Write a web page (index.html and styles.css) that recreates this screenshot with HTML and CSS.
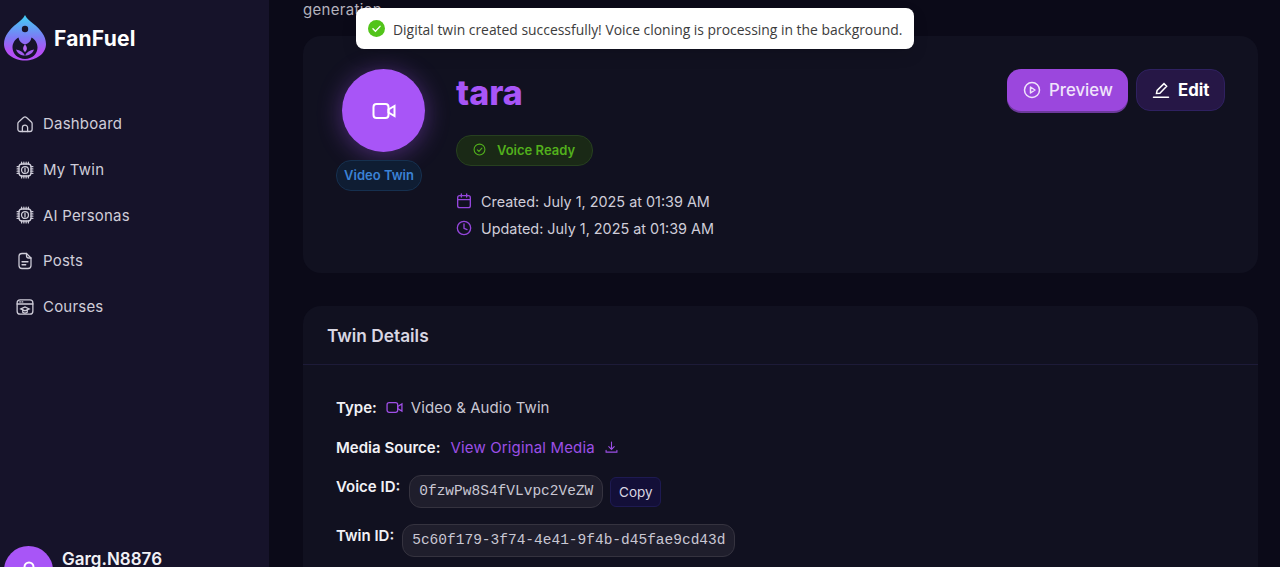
FILE: index.html
```html
<!DOCTYPE html>
<html lang="en">
<head>
  <meta charset="UTF-8">
  <meta name="viewport" content="width=device-width, initial-scale=1.0">
  <title>FanFuel - tara</title>
  <link rel="stylesheet" href="styles.css">
</head>
<body>
  <svg class="sprites" width="0" height="0">
    <defs>
      <linearGradient id="dropFill" x1="0" y1="0" x2="0" y2="1">
        <stop offset="0.05" stop-color="#45c8f4"/>
        <stop offset="0.5" stop-color="#7d7af5"/>
        <stop offset="0.8" stop-color="#b44ff6"/>
      </linearGradient>
      <symbol id="i-chip" viewBox="0 0 24 24">
        <rect x="4" y="4" width="16" height="16" rx="4"/>
        <circle cx="12" cy="12" r="4.6"/>
        <path d="M12 9.500v5M7.500 1.500v2.500M10.500 1.500v2.500M13.500 1.500v2.500M16.500 1.500v2.500M7.500 20v2.500M10.500 20v2.500M13.500 20v2.500M16.500 20v2.500M1.500 7.500H4M1.500 10.500H4M1.500 13.500H4M1.500 16.500H4M20 7.500h2.500M20 10.500h2.500M20 13.500h2.500M20 16.500h2.500"/>
      </symbol>
      <symbol id="i-video" viewBox="0 0 24 24">
        <rect x="1.500" y="5" width="15" height="14" rx="3"/>
        <path d="M16.500 10.500l6-3.500v10l-6-3.500z"/>
      </symbol>
    </defs>
  </svg>

  <div class="shell">
    <aside class="sidebar">
      <div class="brand">
        <svg class="logo" viewBox="0 0 42 46">
          <path fill="url(#dropFill)" d="M21 0c1.500 3 4 5.500 8 8.500 7 5.500 13 12 13 20.500C42 38.500 32.500 45.500 21 45.500S0 38.500 0 29C0 20.500 6 14 13 8.500 17 5.500 19.500 3 21 0z"/>
          <circle cx="21" cy="14" r="3.200" fill="#17142b"/>
          <path fill="#17142b" d="M21 44c-7 0-12.500-5-12.500-11.500 0-4.500 2.500-8 6-10 .5 3.500 3 6 6.500 7 3.500-1 6-3.500 6.500-7 3.500 2 6 5.500 6 10C33.500 39 28 44 21 44z"/>
          <path fill="#a45cf0" d="M21 40.500c-1.500-3.500-5-5.500-9-6 1.500 4 5 6 9 6zM21 40.500c1.500-3.500 5-5.500 9-6-1.500 4-5 6-9 6z"/>
          <path fill="#b565f5" d="M21 37c-2.500-2-2.500-5 0-7.500 2.500 2.500 2.500 5.500 0 7.500z"/>
        </svg>
        <span class="brand-name">FanFuel</span>
      </div>
      <nav class="nav">
        <a class="nav-item" href="#">
          <svg class="nav-icon" viewBox="0 0 24 24"><path d="M2.500 11.500a3 3 0 0 1 1-2.200L10 3.300a3 3 0 0 1 4 0l6.500 6a3 3 0 0 1 1 2.200V19a3 3 0 0 1-3 3h-13a3 3 0 0 1-3-3z"/><path d="M8.500 22v-5a3.500 3.500 0 0 1 7 0v5"/></svg>
          Dashboard
        </a>
        <a class="nav-item" href="#">
          <svg class="nav-icon"><use href="#i-chip"/></svg>
          My Twin
        </a>
        <a class="nav-item" href="#">
          <svg class="nav-icon"><use href="#i-chip"/></svg>
          AI Personas
        </a>
        <a class="nav-item" href="#">
          <svg class="nav-icon" viewBox="0 0 24 24"><path d="M14 2H8a4 4 0 0 0-4 4v12a4 4 0 0 0 4 4h8a4 4 0 0 0 4-4V8z" stroke-linejoin="round"/><path d="M14 2v3a3 3 0 0 0 3 3h3M8 13h8M8 17h5"/></svg>
          Posts
        </a>
        <a class="nav-item" href="#">
          <svg class="nav-icon" viewBox="0 0 24 24"><rect x="1.500" y="2.500" width="21" height="19" rx="4"/><path d="M1.500 8h21M5 5.300h1M8 5.300h1M6.500 14.500L12 12l5.500 2.500L12 17zM9 16v3a5 5 0 0 0 6 0v-3"/></svg>
          Courses
        </a>
      </nav>
      <div class="user">
        <div class="user-avatar">
          <svg viewBox="0 0 24 24"><circle cx="12" cy="8" r="4.500"/><path d="M3.500 22a8.500 8.500 0 0 1 17 0"/></svg>
        </div>
        <span class="user-name">Garg.N8876</span>
      </div>
    </aside>

    <main class="main">
      <p class="intro">generation</p>

      <section class="card hero">
        <div class="hero-left">
          <div class="hero-avatar"><svg class="hero-avatar-icon"><use href="#i-video"/></svg></div>
          <span class="type-badge">Video Twin</span>
        </div>
        <div class="hero-info">
          <h1 class="hero-title">tara</h1>
          <span class="voice-badge">
            <svg viewBox="0 0 24 24"><circle cx="12" cy="12" r="10"/><path d="M8 12.500l3 3 5.500-6"/></svg>
            Voice Ready
          </span>
          <div class="dates">
            <div class="date-row">
              <svg viewBox="0 0 24 24"><rect x="2.500" y="4" width="19" height="18" rx="3"/><path d="M2.500 10h19M8 1.500V6M16 1.500V6"/></svg>
              Created: July 1, 2025 at 01:39 AM
            </div>
            <div class="date-row">
              <svg viewBox="0 0 24 24"><circle cx="12" cy="12" r="10"/><path d="M12 6v6.500l4.500 2"/></svg>
              Updated: July 1, 2025 at 01:39 AM
            </div>
          </div>
        </div>
        <div class="hero-actions">
          <button class="btn btn-preview">
            <svg viewBox="0 0 24 24"><circle cx="12" cy="12" r="10"/><path d="M10 8l6 4-6 4z" stroke-linejoin="round"/></svg>
            Preview
          </button>
          <button class="btn btn-edit">
            <svg viewBox="0 0 24 24"><path d="M6 16.500l.8-4L16 3.500l3.500 3.500-9 9.300zM2 21.500h20"/></svg>
            Edit
          </button>
        </div>
      </section>

      <section class="card details">
        <h2 class="details-title">Twin Details</h2>
        <div class="details-body">
          <div class="detail-row">
            <span class="detail-label">Type:</span>
            <svg class="detail-icon"><use href="#i-video"/></svg>
            <span class="detail-value">Video &amp; Audio Twin</span>
          </div>
          <div class="detail-row row-media">
            <span class="detail-label">Media Source:</span>
            <a class="detail-link" href="#">View Original Media</a>
            <svg class="link-icon" viewBox="0 0 24 24"><path d="M12 2v13M7 10.500l5 5 5-5M2 17v3.500h20V17"/></svg>
          </div>
          <div class="detail-row row-id">
            <span class="detail-label">Voice ID:</span>
            <code class="id-chip">0fzwPw8S4fVLvpc2VeZW</code>
            <button class="copy-btn">Copy</button>
          </div>
          <div class="detail-row row-id">
            <span class="detail-label label-twin">Twin ID:</span>
            <code class="id-chip">5c60f179-3f74-4e41-9f4b-d45fae9cd43d</code>
          </div>
        </div>
      </section>
    </main>
  </div>

  <div class="toast">
    <svg viewBox="0 0 24 24"><circle cx="12" cy="12" r="12" fill="#52c41a"/><path d="M7 12.500l3.500 3.500 6.500-7" fill="none" stroke="#fff" stroke-width="2"/></svg>
    <span class="toast-text">Digital twin created successfully! Voice cloning is processing in the background.</span>
  </div>
</body>
</html>
```

FILE: styles.css
```css
html, body {
  margin: 0;
  height: 100%;
  overflow: hidden;
}
body {
  font-family: Inter, 'Open Sans', sans-serif;
  background: #0b0a18;
  color: #d8d6e2;
}
svg {
  fill: none;
  stroke: currentColor;
  stroke-width: 2;
  stroke-linecap: round;
  flex-shrink: 0;
}
.sprites {
  position: absolute;
}
.shell {
  display: flex;
  height: 567px;
  overflow: hidden;
}

/* sidebar */
.sidebar {
  width: 269px;
  height: 567px;
  flex-shrink: 0;
  background: #16132a;
  display: flex;
  flex-direction: column;
  overflow: hidden;
}
.brand {
  display: flex;
  align-items: center;
  gap: 8px;
  padding: 15px 0 0 4px;
  height: 46px;
}
.logo {
  width: 42px;
  height: 46px;
  stroke: none;
}
.logo * {
  stroke: none;
}
.brand-name {
  font-size: 21px;
  font-weight: 700;
  color: #fff;
  letter-spacing: 0.2px;
}
.nav {
  display: flex;
  flex-direction: column;
  margin-top: 40px;
}
.nav-item {
  display: flex;
  align-items: center;
  gap: 9px;
  height: 45.7px;
  padding-left: 16px;
  font-size: 15px;
  letter-spacing: 0.2px;
  color: #cfcdd9;
  text-decoration: none;
}
.nav-icon {
  width: 18px;
  height: 18px;
  stroke-width: 1.700;
}
.user {
  display: flex;
  gap: 9px;
  margin-top: 217px;
  padding-left: 4px;
}
.user-avatar {
  width: 49px;
  height: 49px;
  border-radius: 50%;
  background: #a855f7;
  color: #fff;
  display: flex;
  justify-content: center;
  align-items: center;
  flex-shrink: 0;
}
.user-avatar svg {
  width: 24px;
  height: 24px;
}
.user-name {
  font-size: 17px;
  font-weight: 600;
  color: #f2f1f6;
  line-height: 26px;
}

/* main column */
.main {
  flex: 1;
  min-width: 0;
  padding: 0 22px 0 34px;
}
.intro {
  margin: 0;
  font-size: 15px;
  line-height: 20px;
  letter-spacing: 0.3px;
  color: #b4b2bd;
  height: 36px;
}
.card {
  background: #111120;
  border-radius: 18px;
}

/* hero card */
.hero {
  display: flex;
  height: 237px;
  box-sizing: border-box;
  padding: 33px 33px 0 33px;
}
.hero-left {
  width: 86px;
  display: flex;
  flex-direction: column;
  align-items: flex-start;
  gap: 8px;
}
.hero-avatar {
  width: 83px;
  height: 83px;
  margin-left: 6px;
  border-radius: 50%;
  background: #a855f7;
  color: #fff;
  box-shadow: 0 3px 24px rgba(168, 85, 247, 0.4);
  display: flex;
  justify-content: center;
  align-items: center;
}
.hero-avatar-icon {
  width: 24px;
  height: 24px;
}
.type-badge {
  width: 86px;
  height: 31px;
  box-sizing: border-box;
  border: 1px solid #16304f;
  background: #0f1d33;
  border-radius: 15px;
  font-size: 13px;
  font-weight: 600;
  line-height: 29px;
  text-align: center;
  color: #3b82d6;
}
.hero-info {
  margin-left: 34px;
  flex: 1;
  display: flex;
  flex-direction: column;
  align-items: flex-start;
}
.hero-title {
  margin: 0;
  font-size: 34px;
  font-weight: 800;
  line-height: 48px;
  color: #a855f7;
}
.voice-badge {
  display: flex;
  align-items: center;
  gap: 11px;
  margin-top: 18px;
  width: 137px;
  height: 31px;
  box-sizing: border-box;
  padding: 0 0 2px 16px;
  border: 1px solid #27401f;
  border-radius: 15px;
  background: #1a2916;
  color: #52b01c;
  font-size: 13px;
  font-weight: 600;
}
.voice-badge svg {
  width: 13px;
  height: 13px;
}
.dates {
  display: flex;
  flex-direction: column;
  gap: 7px;
  margin-top: 25px;
}
.date-row {
  display: flex;
  align-items: center;
  gap: 9px;
  height: 20px;
  font-size: 14.4px;
  color: #cfcdd9;
}
.date-row svg {
  width: 16px;
  height: 16px;
  color: #9546dc;
}
.hero-actions {
  display: flex;
  gap: 8px;
  align-items: flex-start;
}
.btn {
  display: flex;
  align-items: center;
  gap: 8px;
  height: 42px;
  box-sizing: border-box;
  border-radius: 14px;
  font-family: inherit;
  font-size: 16.8px;
  color: #fff;
}
.btn svg {
  width: 18px;
  height: 18px;
}
.btn-preview {
  width: 121px;
  padding: 0 0 0 16px;
  border: 0;
  background: #9b47dd;
  box-shadow: 0 2px 0 #6d3a9c;
  font-weight: 500;
  color: #f0e4fb;
}
.btn-edit {
  width: 89px;
  padding: 0 0 0 15px;
  border: 1px solid #2f2160;
  background: #261746;
  font-weight: 700;
}

/* details card */
.details {
  margin-top: 33px;
  height: 400px;
}
.details-title {
  margin: 0;
  height: 59px;
  box-sizing: border-box;
  padding-left: 24px;
  border-bottom: 1px solid #1d1b38;
  font-size: 17.300px;
  font-weight: 600;
  line-height: 59px;
  color: #d8d6e2;
}
.details-body {
  padding: 23px 0 0 33px;
}
.detail-row {
  display: flex;
  align-items: center;
  height: 39.500px;
  font-size: 15px;
}
.row-media {
  margin-bottom: 8px;
}
.detail-label {
  font-weight: 600;
  color: #f2f1f6;
  margin-right: 9px;
}
.label-twin {
  margin-right: 8px;
}
.detail-icon {
  width: 17px;
  height: 17px;
  color: #a04fe8;
  margin-right: 8px;
  stroke-width: 1.800;
}
.detail-value {
  color: #c9c7d3;
  letter-spacing: 0.05px;
}
.detail-link {
  color: #9c4fe6;
  text-decoration: none;
  letter-spacing: 0.15px;
  margin-left: 1px;
}
.link-icon {
  width: 13px;
  height: 13px;
  margin-left: 10px;
  color: #9c4fe6;
}
.row-id {
  align-items: flex-start;
  height: 49px;
}
.row-id .detail-label {
  line-height: 24px;
}
.id-chip {
  display: block;
  height: 33px;
  box-sizing: border-box;
  padding: 0 9px;
  border: 1px solid #35333f;
  border-radius: 12px;
  background: #1f1e2c;
  font-family: 'Liberation Mono', monospace;
  font-size: 14.500px;
  line-height: 31px;
  color: #c9c7d3;
}
.copy-btn {
  width: 51px;
  height: 30px;
  margin: 2px 0 0 7px;
  padding: 0;
  border: 1px solid #1e1a52;
  border-radius: 6px;
  background: #130f38;
  font-family: inherit;
  font-size: 13.500px;
  color: #d8d6e2;
}

/* notification sits over the page */
.toast {
  position: absolute;
  left: 356px;
  top: 8px;
  width: 558px;
  height: 41px;
  box-sizing: border-box;
  padding-left: 12px;
  display: flex;
  align-items: center;
  gap: 8px;
  background: #fff;
  border-radius: 8px;
  box-shadow: 0 6px 16px rgba(0, 0, 0, 0.1);
  font-family: 'Open Sans', 'Noto Sans', sans-serif;
  font-size: 13.900px;
  color: #3c3c3c;
  white-space: nowrap;
}
.toast-text {
  padding-top: 2px;
}
.toast svg {
  width: 17px;
  height: 17px;
  stroke: none;
}
```
